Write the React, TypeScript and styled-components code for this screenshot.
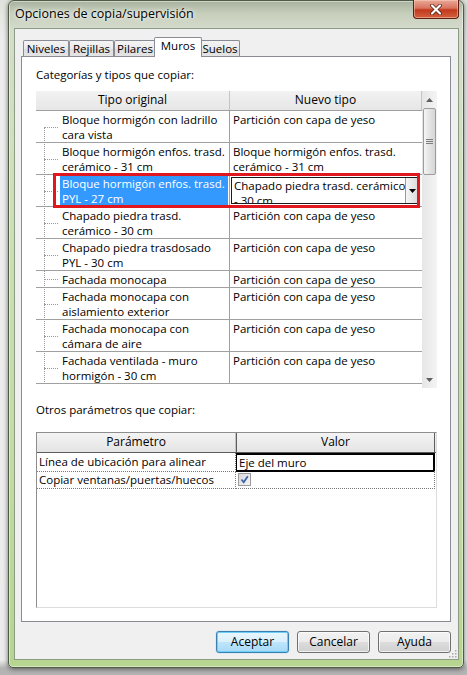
import React from "react"
import styled, { createGlobalStyle } from "styled-components"

const GlobalStyle = createGlobalStyle`
  html, body {
    margin: 0;
    padding: 0;
  }
  body {
    background: #d2d2d2;
    color: #000;
    font-family: "Open Sans", "Noto Sans", sans-serif;
    font-size: 11.5px;
    height: 675px;
    overflow: hidden;
    width: 467px;
  }
  * {
    box-sizing: border-box;
  }
`

const Page = styled.div`
  background: linear-gradient(to bottom, #dfe3da 0, #eeeeee 40px, #ececec 660px, #b4b4b4 668px);
  height: 675px;
  padding-left: 8px;
  width: 467px;
`

const Dialog = styled.div`
  background: linear-gradient(
    to bottom,
    #a7b19c 0,
    #c6cebb 12px,
    #d5dbcb 28px,
    #d0e0bb 160px,
    #c4dca6 420px,
    #b6d58f 668px
  );
  border: 1px solid #4f5c45;
  border-radius: 6px 6px 5px 5px;
  box-shadow: 0 1px 5px rgba(0, 0, 0, 0.55), inset 0 0 0 1px rgba(255, 255, 255, 0.45);
  display: flex;
  flex-direction: column;
  height: 668px;
  width: 456px;
`

const TitleBar = styled.div`
  align-items: flex-start;
  display: flex;
  height: 27px;
  justify-content: space-between;
  padding-left: 6px;
`

const TitleText = styled.span`
  font-size: 12.5px;
  line-height: 26px;
  text-shadow: 0 0 6px rgba(255, 255, 255, 0.95), 0 0 3px rgba(255, 255, 255, 0.9);
`

const CloseButton = styled.div`
  align-items: center;
  background: linear-gradient(to bottom, #e9a998 0, #d9745e 45%, #c2381d 55%, #d4623f 100%);
  border: 1px solid #5e1e14;
  border-radius: 0 0 4px 4px;
  border-top: none;
  box-shadow: inset 0 0 0 1px rgba(255, 220, 200, 0.45);
  display: flex;
  height: 19px;
  justify-content: center;
  margin-right: 4px;
  margin-top: -1px;
  width: 46px;
`

const Client = styled.div`
  background: #f0f0f0;
  border: 1px solid #8c9c84;
  display: flex;
  flex-direction: column;
  height: 632px;
  margin: 0 4px 0 5px;
  padding: 8px 7px 0 6px;
  position: relative;
`

const TabStrip = styled.div`
  align-items: flex-end;
  display: flex;
  height: 20px;
  margin-bottom: -1px;
  padding-left: 2px;
  position: relative;
  z-index: 1;
`

const Tab = styled.div<{ $width: number; $active?: boolean }>`
  background: ${({ $active }) =>
    $active ? "#fff" : "linear-gradient(to bottom, #f4f4f4 0, #ebebeb 50%, #dedede 51%, #e4e4e4 100%)"};
  border: 1px solid #898c95;
  border-bottom: none;
  border-radius: 2px 2px 0 0;
  height: ${({ $active }) => ($active ? "20px" : "16px")};
  line-height: ${({ $active }) => ($active ? "16px" : "15px")};
  margin: ${({ $active }) => ($active ? "0 -2px" : "0 0 1px")};
  position: relative;
  text-align: center;
  white-space: nowrap;
  width: ${({ $width }) => $width}px;
  z-index: ${({ $active }) => ($active ? 2 : 1)};
`

const Panel = styled.div`
  background: #fff;
  border: 1px solid #898c95;
  display: flex;
  flex-direction: column;
  height: 566px;
  padding: 10px 13px 0 14px;
`

const SectionLabel = styled.div<{ $top?: number }>`
  height: 15px;
  line-height: 15px;
  margin-bottom: ${({ $top }) => ($top ? 15 : 9)}px;
  margin-top: ${({ $top }) => $top || 0}px;
`

const TypeTable = styled.div`
  background: #fff;
  display: flex;
  height: 297px;
`

const ListArea = styled.div`
  display: flex;
  flex: 1;
  flex-direction: column;
  overflow: hidden;
`

const HeaderRow = styled.div`
  background: linear-gradient(to bottom, #f2f2f2 0, #e6e6e6 100%);
  border-bottom: 1px solid #a0a0a0;
  display: flex;
  height: 20px;
`

const HeaderCell = styled.div<{ $width?: number; $focus?: boolean }>`
  border-right: 1px solid ${({ $focus }) => ($focus ? "#5c5c5c" : "#c4c4c4")};
  border-left: ${({ $focus }) => ($focus ? "1px solid #5c5c5c" : "none")};
  flex: ${({ $width }) => ($width ? `0 0 ${$width}px` : "1")};
  font-size: 12px;
  line-height: 18px;
  text-align: center;
`

const TypeRow = styled.div`
  border-bottom: 1px solid #a0a0a0;
  display: flex;
  position: relative;
`

const OriginalCell = styled.div`
  border-right: 1px solid #a0a0a0;
  display: flex;
  flex: 0 0 194px;
`

const Gutter = styled.div<{ $first?: boolean }>`
  flex: 0 0 24px;
  position: relative;

  &::before {
    border-left: 1px dotted #9a9a9a;
    bottom: -1px;
    content: "";
    left: 8px;
    position: absolute;
    top: ${({ $first }) => ($first ? "50%" : "-1px")};
  }

  &::after {
    border-top: 1px dotted #9a9a9a;
    content: "";
    left: 8px;
    position: absolute;
    top: 50%;
    width: 14px;
  }
`

const CellText = styled.div<{ $selected?: boolean }>`
  background: ${({ $selected }) => ($selected ? "#3399ff" : "transparent")};
  color: ${({ $selected }) => ($selected ? "#fff" : "#000")};
  flex: 1;
  margin: 1px 1px 0 0;
  padding: 0 2px;
`

const Line = styled.div`
  line-height: 15px;
  white-space: nowrap;
`

const NewCell = styled.div`
  flex: 1;
  padding: 1px 0 0 3px;
`

const Combo = styled.div`
  background: #fff;
  border: 1px solid #1b1b1b;
  display: flex;
  height: 27px;
  margin: 1px 5px 0 -2px;
  overflow: hidden;
`

const ComboText = styled.div`
  flex: 1;
  padding-left: 2px;
`

const ComboButton = styled.div`
  align-items: center;
  background: linear-gradient(to right, #f6f6f6 0, #dadada 100%);
  border-left: 1px solid #9a9a9a;
  display: flex;
  flex: 0 0 13px;
  justify-content: center;
`

const Annotation = styled.div`
  border: 3px solid #e0171f;
  bottom: -2px;
  left: 17px;
  pointer-events: none;
  position: absolute;
  right: 2px;
  top: -2px;
  z-index: 3;
`

const Scrollbar = styled.div`
  background: linear-gradient(to right, #e6e6e6 0, #f4f4f4 100%);
  display: flex;
  flex: 0 0 15px;
  flex-direction: column;
`

const ScrollArrow = styled.div`
  align-items: center;
  display: flex;
  flex: 0 0 17px;
  justify-content: center;
`

const Thumb = styled.div`
  align-items: center;
  background: linear-gradient(to right, #f5f5f5 0, #e3e3e3 50%, #d6d6d6 100%);
  border: 1px solid #9b9b9b;
  border-radius: 2px;
  display: flex;
  flex: 0 0 67px;
  justify-content: center;
  margin: 0 1px;
`

const ScrollSpace = styled.div`
  flex: 1;
`

const ParamTable = styled.div`
  background: #fff;
  border: 1px solid;
  border-color: #8e8e8e #dcdcdc #dcdcdc #8e8e8e;
  display: flex;
  flex-direction: column;
  height: 176px;
`

const ParamHeader = styled.div`
  background: linear-gradient(to bottom, #f4f4f4 0, #e4e4e4 100%);
  border-bottom: 1px solid #5c5c5c;
  display: grid;
  grid-template-columns: 199px 199px;
  height: 20px;
`

const ParamRow = styled.div`
  display: grid;
  grid-template-columns: 199px 199px;
  height: 18px;
`

const ParamName = styled.div`
  border-bottom: 1px dotted #7a7a7a;
  border-right: 1px dotted #7a7a7a;
  line-height: 17px;
  padding-left: 2px;
  white-space: nowrap;
`

const ParamValue = styled.div<{ $editing?: boolean }>`
  align-items: center;
  border: ${({ $editing }) => ($editing ? "1px solid #000" : "none")};
  border-bottom: ${({ $editing }) => ($editing ? "2px solid #000" : "1px dotted #7a7a7a")};
  border-right: ${({ $editing }) => ($editing ? "2px solid #000" : "1px dotted #7a7a7a")};
  border-top: ${({ $editing }) => ($editing ? "2px solid #000" : "none")};
  display: flex;
  padding-left: 2px;
  white-space: nowrap;
`

const CheckBox = styled.div`
  align-items: center;
  background: linear-gradient(135deg, #d9d9d9 0, #f4f4f4 100%);
  border: 1px solid #9a9a9a;
  display: flex;
  height: 13px;
  justify-content: center;
  width: 13px;
`

const ButtonRow = styled.div`
  display: flex;
  gap: 8px;
  justify-content: flex-end;
  margin-top: 9px;
`

const Button = styled.div<{ $primary?: boolean }>`
  background: ${({ $primary }) =>
    $primary
      ? "linear-gradient(to bottom, #eaf6fd 0, #d9f0fc 50%, #bee6fd 51%, #a7d9f5 100%)"
      : "linear-gradient(to bottom, #f2f2f2 0, #ebebeb 50%, #dddddd 51%, #cfcfcf 100%)"};
  border: 1px solid ${({ $primary }) => ($primary ? "#3c7fb1" : "#707070")};
  border-radius: 3px;
  box-shadow: ${({ $primary }) =>
    $primary ? "inset 0 0 0 1px #6fd0f7, 0 0 1px #48a8e8" : "inset 0 0 0 1px rgba(255,255,255,0.7)"};
  font-size: 12px;
  height: 22px;
  line-height: 20px;
  text-align: center;
  width: 73px;
`

const Grip = styled.svg`
  bottom: 1px;
  position: absolute;
  right: 1px;
`

const tabs = [
  { name: "Niveles", width: 46 },
  { name: "Rejillas", width: 45 },
  { name: "Pilares", width: 42 },
  { name: "Muros", width: 48, active: true },
  { name: "Suelos", width: 40 },
]

const yeso = ["Partición con capa de yeso"]

const types = [
  { original: ["Bloque hormigón con ladrillo", "cara vista"], nuevo: yeso },
  {
    original: ["Bloque hormigón enfos. trasd.", "cerámico - 31 cm"],
    nuevo: ["Bloque hormigón enfos. trasd.", "cerámico - 31 cm"],
  },
  {
    original: ["Bloque hormigón enfos. trasd.", "PYL - 27 cm"],
    nuevo: ["Chapado piedra trasd. cerámico", "- 30 cm"],
    selected: true,
  },
  { original: ["Chapado piedra trasd.", "cerámico - 30 cm"], nuevo: yeso },
  { original: ["Chapado piedra trasdosado", "PYL - 30 cm"], nuevo: yeso },
  { original: ["Fachada monocapa"], nuevo: yeso },
  { original: ["Fachada monocapa con", "aislamiento exterior"], nuevo: yeso },
  { original: ["Fachada monocapa con", "cámara de aire"], nuevo: yeso },
  { original: ["Fachada ventilada - muro", "hormigón - 30 cm"], nuevo: yeso },
]

const Arrow = ({ down }: { down?: boolean }) => (
  <svg width="7" height="4" viewBox="0 0 7 4">
    <path d={down ? "M0 0 L7 0 L3.5 4 Z" : "M0 4 L7 4 L3.5 0 Z"} fill="#5f5f5f" />
  </svg>
)

const App = () => {
  return (
    <Page>
      <GlobalStyle />
      <Dialog>
        <TitleBar>
          <TitleText>Opciones de copia/supervisión</TitleText>
          <CloseButton>
            <svg width="12" height="11" viewBox="0 0 12 11">
              <path d="M2 1.5 L10 9.5 M10 1.5 L2 9.5" stroke="#4a1a12" strokeWidth="3.6" strokeLinecap="round" />
              <path d="M2 1.5 L10 9.5 M10 1.5 L2 9.5" stroke="#fff" strokeWidth="2.2" strokeLinecap="round" />
            </svg>
          </CloseButton>
        </TitleBar>
        <Client>
          <TabStrip>
            {tabs.map(tab => (
              <Tab key={tab.name} $width={tab.width} $active={tab.active}>
                {tab.name}
              </Tab>
            ))}
          </TabStrip>
          <Panel>
            <SectionLabel>Categorías y tipos que copiar:</SectionLabel>
            <TypeTable>
              <ListArea>
                <HeaderRow>
                  <HeaderCell $width={194}>Tipo original</HeaderCell>
                  <HeaderCell>Nuevo tipo</HeaderCell>
                </HeaderRow>
                {types.map((row, i) => (
                  <TypeRow key={i}>
                    <OriginalCell>
                      <Gutter $first={i === 0} />
                      <CellText $selected={row.selected}>
                        {row.original.map(line => (
                          <Line key={line}>{line}</Line>
                        ))}
                      </CellText>
                    </OriginalCell>
                    <NewCell>
                      {row.selected ? (
                        <Combo>
                          <ComboText>
                            {row.nuevo.map(line => (
                              <Line key={line}>{line}</Line>
                            ))}
                          </ComboText>
                          <ComboButton>
                            <svg width="7" height="4" viewBox="0 0 7 4">
                              <path d="M0 0 L7 0 L3.5 4 Z" fill="#000" />
                            </svg>
                          </ComboButton>
                        </Combo>
                      ) : (
                        row.nuevo.map(line => <Line key={line}>{line}</Line>)
                      )}
                    </NewCell>
                    {row.selected && <Annotation />}
                  </TypeRow>
                ))}
              </ListArea>
              <Scrollbar>
                <ScrollArrow>
                  <Arrow />
                </ScrollArrow>
                <Thumb>
                  <svg width="7" height="7" viewBox="0 0 7 7">
                    <path d="M0 1.5 H7 M0 3.5 H7 M0 5.5 H7" stroke="#7d7d7d" strokeWidth="1" />
                  </svg>
                </Thumb>
                <ScrollSpace />
                <ScrollArrow>
                  <Arrow down />
                </ScrollArrow>
              </Scrollbar>
            </TypeTable>
            <SectionLabel $top={14}>Otros parámetros que copiar:</SectionLabel>
            <ParamTable>
              <ParamHeader>
                <HeaderCell>Parámetro</HeaderCell>
                <HeaderCell $focus>Valor</HeaderCell>
              </ParamHeader>
              <ParamRow>
                <ParamName>Línea de ubicación para alinear</ParamName>
                <ParamValue $editing>Eje del muro</ParamValue>
              </ParamRow>
              <ParamRow>
                <ParamName>Copiar ventanas/puertas/huecos</ParamName>
                <ParamValue>
                  <CheckBox>
                    <svg width="9" height="9" viewBox="0 0 9 9">
                      <path d="M1.5 4.5 L3.7 7.2 L7.8 1.2" stroke="#3d64a8" strokeWidth="1.8" fill="none" />
                    </svg>
                  </CheckBox>
                </ParamValue>
              </ParamRow>
            </ParamTable>
          </Panel>
          <ButtonRow>
            <Button $primary>Aceptar</Button>
            <Button>Cancelar</Button>
            <Button>Ayuda</Button>
          </ButtonRow>
          <Grip width="8" height="8" viewBox="0 0 8 8">
            <g fill="#a8a8a8">
              <rect x="6" y="0" width="1.5" height="1.5" />
              <rect x="3" y="3" width="1.5" height="1.5" />
              <rect x="6" y="3" width="1.5" height="1.5" />
              <rect x="0" y="6" width="1.5" height="1.5" />
              <rect x="3" y="6" width="1.5" height="1.5" />
              <rect x="6" y="6" width="1.5" height="1.5" />
            </g>
          </Grip>
        </Client>
      </Dialog>
    </Page>
  )
}

export default App
